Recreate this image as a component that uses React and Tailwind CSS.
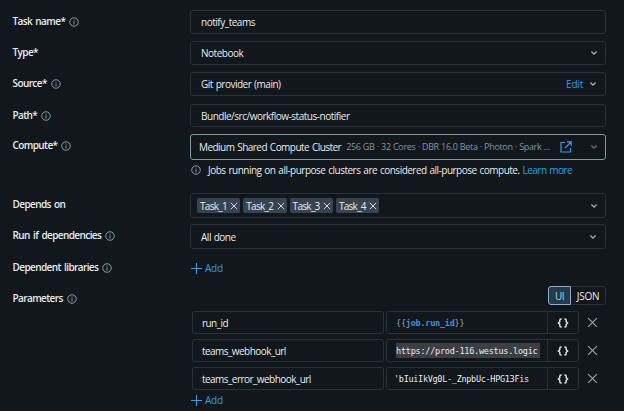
import React from "react";

function Info({ className = "" }) {
  return (
    <svg viewBox="0 0 16 16" className={"size-[10px] shrink-0 text-[#92a4b3] " + className} fill="none" stroke="currentColor" strokeWidth="1.5">
      <circle cx="8" cy="8" r="6.8" />
      <path d="M8 7v5M8 4v1.7" />
    </svg>
  );
}

function Chevron({ className = "" }) {
  return (
    <svg viewBox="0 0 8 6" className={"h-[6px] w-[8px] shrink-0 " + className} fill="none" stroke="currentColor" strokeWidth="1.3">
      <path d="M1.4 1.5 4 4.1 6.6 1.5" />
    </svg>
  );
}

function Cross({ className = "" }) {
  return (
    <svg viewBox="0 0 10 10" className={"shrink-0 " + className} fill="none" stroke="currentColor" strokeWidth="1.1">
      <path d="m1 1 8 8M9 1 1 9" />
    </svg>
  );
}

function Row({ label, info, className, children }) {
  return (
    <div className={"flex items-start " + className}>
      <div className="flex h-[22px] w-[177.500px] shrink-0 items-center gap-[4px] text-[10px] font-semibold tracking-[-0.6px] [word-spacing:1.2px] text-[#e8ecf0]">
        <span>{label}</span>
        {info && <Info className="mt-[2px]" />}
      </div>
      <div className="w-[416px]">{children}</div>
    </div>
  );
}

function Box({ className = "h-[24px] border-[#273139] pl-[10px]", children }) {
  return <div className={"flex items-center rounded-[3px] border pr-[7px] " + className}>{children}</div>;
}

function Add({ className = "" }) {
  return (
    <div className={"flex items-center gap-[3px] text-[10px] tracking-[-0.2px] text-[#4299e0] " + className}>
      <svg viewBox="0 0 11 11" className="ml-px size-[11px]" fill="none" stroke="currentColor" strokeWidth="1.1">
        <path d="M5.5 0v11M0 5.5h11" />
      </svg>
      <span>Add</span>
    </div>
  );
}

function Param({ name, children }) {
  return (
    <div className="flex h-[23px] items-center">
      <div className="flex h-full w-[192px] items-center rounded-[3px] border border-[#273139] pl-[9px] pt-px tracking-[-0.55px]">{name}</div>
      <div className="ml-[2px] flex h-full w-[162px] items-center rounded-l-[3px] border border-[#273139] pl-[9px] font-['DejaVu_Sans_Mono',monospace] text-[8.5px] tracking-[-0.24px] whitespace-pre">
        {children}
      </div>
      <div className="-ml-px flex h-full w-[32px] items-center justify-center rounded-r-[3px] border border-[#273139]">
        <svg viewBox="0 0 12 10" className="h-[10px] w-[12px]" fill="none" stroke="currentColor" strokeWidth="1.4">
          <path d="M4.6 1H4Q2.8 1 2.8 2.2v1.600L1.400 5l1.400 1.200v1.600Q2.800 9 4 9h.6M7.400 1H8q1.200 0 1.200 1.200v1.600L10.600 5 9.200 6.200v1.600Q9.200 9 8 9h-.6" />
        </svg>
      </div>
      <Cross className="ml-[8px] size-[11px] text-[#92a4b3]" />
    </div>
  );
}

const tasks = ["Task_1", "Task_2", "Task_3", "Task_4"];

export default function App() {
  return (
    <div className="h-[411px] w-[624px] overflow-hidden bg-[#11171c] pt-[10px] pl-[12.5px] font-['Open_Sans','Noto_Sans',sans-serif] text-[10px] leading-[14px] tracking-[-0.48px] [word-spacing:0.6px] whitespace-nowrap text-[#e8ecf0]">
      <Row label="Task name*" info className="h-[31px]">
        <Box>notify_teams</Box>
      </Row>
      <Row label="Type*" className="h-[31px]">
        <Box>
          Notebook
          <Chevron className="ml-auto text-[#a5b1bb]" />
        </Box>
      </Row>
      <Row label="Source*" info className="h-[32px]">
        <Box>
          Git provider (main)
          <span className="mr-[6px] ml-auto tracking-[-0.2px] text-[#4299e0]">Edit</span>
          <Chevron className="mr-[1px] text-[#a5b1bb]" />
        </Box>
      </Row>
      <Row label="Path*" info className="h-[30px]">
        <Box className="h-[23px] border-[#273139] pt-px pl-[10px]">Bundle/src/workflow-status-notifier</Box>
      </Row>
      <Row label="Compute*" info className="h-[59px]">
        <Box className="h-[26px] border-[#8796a1] pl-[8px]">
          <span className="tracking-[-0.54px] [word-spacing:0.8px]">Medium Shared Compute Cluster</span>
          <span className="ml-[5px] text-[9px] tracking-[-0.32px] [word-spacing:0.2px] text-[#8496a4]">256 GB · 32 Cores · DBR 16.0 Beta · Photon · Spark ...</span>
          <svg viewBox="0 0 12 12" className="ml-auto size-[12px] shrink-0 text-[#4299e0]" fill="none" stroke="currentColor" strokeWidth="1.2">
            <path d="M5 1.500H1V11H10.500V7M7 .8H11.200V5M11 1 5 7" />
          </svg>
          <Chevron className="ml-[18px] text-[#66747e]" />
        </Box>
        <div className="mt-[3px] flex items-center pl-[1px]">
          <Info className="mr-[7px]" />
          <span className="tracking-[-0.51px] [word-spacing:0.8px]">Jobs running on all-purpose clusters are considered all-purpose compute.</span>
          <span className="ml-[3px] tracking-[-0.53px] text-[#37a0e0]">Learn more</span>
        </div>
      </Row>
      <Row label="Depends on" className="h-[31px]">
        <Box className="h-[25px] border-[#273139] pl-[6px]">
          <div className="flex gap-[3px]">
            {tasks.map((t) => (
              <div key={t} className="flex h-[15px] w-[43.3px] items-center justify-between rounded-[2px] bg-[#37444f] pr-[2px] pl-[3px] tracking-[-0.7px]">
                <span>{t}</span>
                <Cross className="size-[8px]" />
              </div>
            ))}
          </div>
          <Chevron className="ml-auto text-[#a5b1bb]" />
        </Box>
      </Row>
      <Row label="Run if dependencies" info className="h-[32px]">
        <Box className="h-[25px] border-[#273139] pl-[10px]">
          All done
          <Chevron className="mr-[1px] ml-auto text-[#a5b1bb]" />
        </Box>
      </Row>
      <Row label="Dependent libraries" info className="h-[31px]">
        <Add className="h-[24px]" />
      </Row>
      <Row label="Parameters" info className="h-[123px]">
        <div className="-mt-px flex h-[19px] justify-end">
          <div className="z-10 flex w-[23px] items-center justify-center rounded-l-[3px] border border-[#8bb0c8] bg-[#243b4a] text-[#a8d4f0]">UI</div>
          <div className="-ml-px flex w-[36px] items-center justify-center rounded-r-[3px] border border-[#273139] tracking-[-0.25px]">JSON</div>
        </div>
        <div className="mt-[6px] ml-[2px] flex flex-col gap-[5px]">
          <Param name="run_id">
            <span className="text-[#92a4b3]">{"{{"}</span>
            <span className="font-bold text-[#4490d8]">job.run_id</span>
            <span className="text-[#92a4b3]">{"}}"}</span>
          </Param>
          <Param name="teams_webhook_url">
            <span className="flex h-[15px] w-[144px] items-center bg-[#3b3f43]">https://prod-116.westus.logic</span>
          </Param>
          <Param name="teams_error_webhook_url">
            <span className="-ml-[2px] tracking-[-0.3px]">'bIuiIkVg0L-_ZnpbUc-HPG13Fis</span>
          </Param>
        </div>
        <Add className="mt-[3px]" />
      </Row>
    </div>
  );
}
